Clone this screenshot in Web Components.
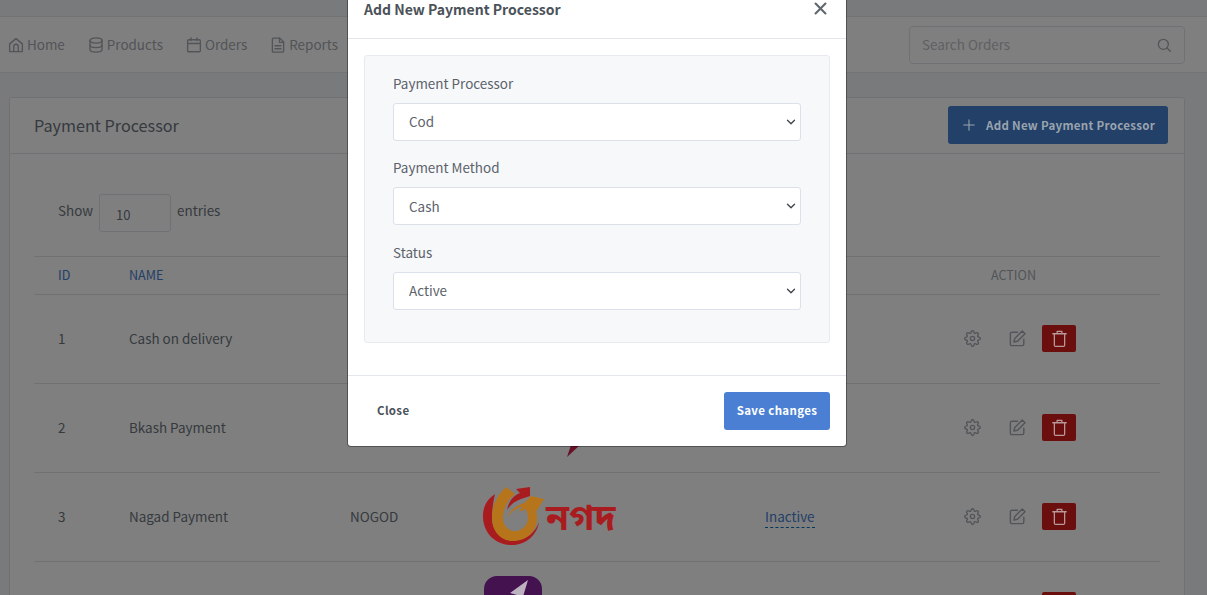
<!doctype html>
<html lang="en"><head><meta charset="utf-8"><title>Payment Processor</title>
<style>
html,body{margin:0;height:100%;overflow:hidden;background:#f2f5f8}
body{font:13.44px/20px "Noto Sans CJK SC","Liberation Sans",sans-serif;color:#6c757d}
</style></head><body>
<pp-app></pp-app>
<script>
const ICONS={
 home:'<path d="M3.500 10.500 12 3.500l8.500 7V20a.8.8 0 0 1-.8.8H4.300a.8.8 0 0 1-.8-.8z"/><path d="M9 20.800V14a3 3 0 0 1 6 0v6.800"/>',
 data:'<ellipse cx="12" cy="6" rx="8" ry="3.500"/><path d="M4 6v12c0 1.900 3.600 3.500 8 3.500s8-1.600 8-3.500V6"/><path d="M4 12c0 1.900 3.600 3.500 8 3.500s8-1.600 8-3.500"/>',
 cal:'<rect x="3.500" y="5" width="17" height="16" rx="1.500"/><path d="M3.500 10h17M8 2.500V6M16 2.500V6"/>',
 file:'<path d="M6 2.800h8.500L19.500 8v12a1.500 1.500 0 0 1-1.500 1.500H6A1.500 1.500 0 0 1 4.500 20V4.300A1.500 1.500 0 0 1 6 2.800z"/><path d="M14 3v5.500h5.500M8 13h8M8 17h8"/>',
 search:'<circle cx="11" cy="11" r="7.500"/><path d="m16.500 16.500 5 5"/>',
 gear:'<circle cx="12" cy="12" r="3"/><path d="M19.400 15a1.650 1.650 0 0 0 .33 1.820l.06.06a2 2 0 0 1 0 2.830 2 2 0 0 1-2.830 0l-.06-.06a1.650 1.650 0 0 0-1.820-.33 1.650 1.650 0 0 0-1 1.510V21a2 2 0 0 1-2 2 2 2 0 0 1-2-2v-.09A1.650 1.650 0 0 0 9 19.400a1.650 1.650 0 0 0-1.820.33l-.06.06a2 2 0 0 1-2.830 0 2 2 0 0 1 0-2.830l.06-.06a1.650 1.650 0 0 0 .33-1.820 1.650 1.650 0 0 0-1.510-1H3a2 2 0 0 1-2-2 2 2 0 0 1 2-2h.09A1.650 1.650 0 0 0 4.600 9a1.650 1.650 0 0 0-.33-1.820l-.06-.06a2 2 0 0 1 0-2.830 2 2 0 0 1 2.830 0l.06.06a1.650 1.650 0 0 0 1.820.33H9a1.650 1.650 0 0 0 1-1.510V3a2 2 0 0 1 2-2 2 2 0 0 1 2 2v.09a1.650 1.650 0 0 0 1 1.510 1.650 1.650 0 0 0 1.820-.33l.06-.06a2 2 0 0 1 2.830 0 2 2 0 0 1 0 2.830l-.06.06a1.650 1.650 0 0 0-.33 1.820V9a1.650 1.650 0 0 0 1.510 1H21a2 2 0 0 1 2 2 2 2 0 0 1-2 2h-.09a1.650 1.650 0 0 0-1.510 1z"/>',
 edit:'<path d="M20 13v6a2 2 0 0 1-2 2H5a2 2 0 0 1-2-2V6a2 2 0 0 1 2-2h7"/><path d="M18 2.500 21.500 6 12 15.500l-4.500 1 1-4.500z"/>',
 trash:'<path d="M3.500 6h17M9 6V3h6v3"/><path d="M5.500 6v14.500a1.500 1.500 0 0 0 1.500 1.500h10a1.500 1.500 0 0 0 1.500-1.500V6"/>',
 plus:'<path d="M12 3v18M3 12h18"/>',
 x:'<path d="M5 5l14 14M19 5 5 19"/>',
 chev:'<path d="m6 9 6 6 6-6"/>'
};
class PIcon extends HTMLElement{connectedCallback(){
 const s=this.getAttribute('size')||16,w=this.getAttribute('weight')||1.8;
 this.attachShadow({mode:'open'}).innerHTML=`<style>:host{display:inline-flex;flex:none}svg{display:block}</style><svg width="${s}" height="${s}" viewBox="0 0 24 24" fill="none" stroke="currentColor" stroke-width="${w}" stroke-linecap="round" stroke-linejoin="round" aria-hidden="true">${ICONS[this.getAttribute('name')]}</svg>`;
}}
customElements.define('p-icon',PIcon);

class NavLink extends HTMLElement{connectedCallback(){
 this.attachShadow({mode:'open'}).innerHTML=`<style>:host{display:flex;align-items:center;gap:2px;color:#a3a9b1}span{padding-bottom:2px}</style><p-icon name="${this.getAttribute('icon')}" size="18" weight="1.800"></p-icon><span><slot></slot></span>`;
}}
customElements.define('nav-link',NavLink);

class TopNav extends HTMLElement{connectedCallback(){
 this.attachShadow({mode:'open'}).innerHTML=`<style>
 :host{display:flex;align-items:center;justify-content:space-between;height:57px;box-sizing:border-box;margin-top:16px;border-top:1px solid #e2e6ea;border-bottom:1px solid #e2e6ea;background:#fff;padding:0 22px 0 7px}
 .links{display:flex;gap:22px}
 .search{width:276px;height:38px;box-sizing:border-box;border:1px solid #dfe3e8;border-radius:4px;display:flex;align-items:center;justify-content:space-between;padding:0 12px 0 12px;color:#bcc1c7}
 .search span{padding-bottom:2px}
 p-icon{color:#a3a9b1}
 </style><div class="links"><nav-link icon="home">Home</nav-link><nav-link icon="data">Products</nav-link><nav-link icon="cal">Orders</nav-link><nav-link icon="file">Reports</nav-link></div>
 <div class="search"><span>Search Orders</span><p-icon name="search" size="16" weight="2"></p-icon></div>`;
}}
customElements.define('top-nav',TopNav);

class ActionIcons extends HTMLElement{connectedCallback(){
 this.attachShadow({mode:'open'}).innerHTML=`<style>
 :host{display:flex;align-items:center;padding-left:24px;color:#a3a9b1}
 .e{margin-left:27px}.d{margin-left:15px;width:34px;height:27px;border-radius:2px;background:#d61c1c;display:flex;align-items:center;justify-content:center}
 .t{color:#b89a9a;position:relative;z-index:15}
 </style><p-icon name="gear" size="17" weight="1.900"></p-icon><p-icon class="e" name="edit" size="19" weight="1.800"></p-icon><span class="d"><p-icon class="t" name="trash" size="19" weight="1.600"></p-icon></span>`;
}}
customElements.define('action-icons',ActionIcons);

class TableRow extends HTMLElement{connectedCallback(){
 this.attachShadow({mode:'open'}).innerHTML=`<style>
 :host{display:grid;grid-template-columns:71px 221px 134px 281px 199px 221px;height:89px;box-sizing:border-box;border-bottom:1px solid #dee2e6;padding-bottom:2px;align-items:center;color:#6c757d;flex:none}
 ::slotted(*){padding-left:24px}
 </style><slot></slot>`;
}}
customElements.define('table-row',TableRow);

class TableHead extends HTMLElement{connectedCallback(){
 this.attachShadow({mode:'open'}).innerHTML=`<style>
 :host{display:grid;grid-template-columns:71px 221px 134px 281px 199px 221px;height:39px;box-sizing:border-box;border-top:1px solid #dee2e6;border-bottom:1px solid #dee2e6;padding-bottom:2px;align-items:center;font-size:12.6px;color:#4680d0;flex:none}
 .id,.n{padding-left:24px}.a{grid-column:6;color:#a3a9b1;padding-left:51px}
 </style><span class="id">ID</span><span class="n">NAME</span><span class="a">ACTION</span>`;
}}
customElements.define('table-head',TableHead);

class NagadLogo extends HTMLElement{connectedCallback(){
 this.attachShadow({mode:'open'}).innerHTML=`<style>:host{display:flex;align-items:center;position:relative;z-index:15;margin-left:-6px;height:70px;color:#a81c20;font:700 37px/40px "Noto Sans Bengali","Noto Sans CJK SC",sans-serif}svg{display:block;flex:none}span{margin:10px 0 0 -2px;white-space:nowrap}</style>
 <svg width="70" height="70" viewBox="0 0 70 70" aria-hidden="true">
  <path d="M17 13C8 19 4.500 27 5 37c1 16 13 27 29 27 14 0 25-10 27-23-4 11-13 18-25 18-13 0-22-9-22-22 0-8 1-16 3-24z" fill="#a81c20"/>
  <path d="M28 6 37 13C29 19 25 28 25 37c0 7 5 13 12 13s13-6 13-13c0-3-1-6-2-9l-7 3c3-5 6-11 12-16l13 3-8 13c1 2 1 4 1 6 0 13-10 23-24 23-13 0-21-10-21-23 0-11 3-20 14-31z" fill="#b7751b"/>
  <path d="M38 8 52 6v9l-9 3c-6 2-11 6-14 11 2-9 6-14 13-17z" fill="#a81c20"/>
  <path d="M29 37c2-7 9-13 18-15l2 2c-9 2-16 6-20 13z" fill="#b7751b"/>
 </svg><span>নগদ</span>`;
}}
customElements.define('nagad-logo',NagadLogo);

class StatusLink extends HTMLElement{connectedCallback(){
 this.attachShadow({mode:'open'}).innerHTML=`<style>:host{display:block;color:#4680d0}span{border-bottom:1px dashed #0a6ebd;padding-bottom:1px}</style><span><slot></slot></span>`;
}}
customElements.define('status-link',StatusLink);

class ProcessorCard extends HTMLElement{connectedCallback(){
 this.attachShadow({mode:'open'}).innerHTML=`<style>
 :host{display:block;margin:24px 22px 0 9px;background:#fff;border:1px solid #dfe3e8;border-radius:3px}
 .h{height:56px;box-sizing:border-box;border-bottom:1px solid #dfe3e8;padding-bottom:2px;display:flex;align-items:center;justify-content:space-between;padding-left:24px;padding-right:16px;font-size:16.2px;color:#6c757d}
 .b{height:38px;width:220px;box-sizing:border-box;background:#4680d0;border-radius:3px;display:flex;align-items:center;gap:10px;padding:0 14px;white-space:nowrap}
 .lbl,.pl{color:#9aa4af;position:relative;z-index:15}
 .lbl{font-size:11.5px;font-weight:700;letter-spacing:.3px}
 .body{padding:40px 24px 0}
 .show{display:flex;align-items:center;height:38px;gap:6px;margin-bottom:24px}
 .t{padding-bottom:6px}
 .sel{width:72px;height:38px;box-sizing:border-box;border:1px solid #dfe3e8;border-radius:3px;padding:3px 16px 0;display:flex;align-items:center;font-size:13px}
 </style>
 <div class="h"><span>Payment Processor</span><div class="b"><p-icon class="pl" name="plus" size="14" weight="1.800"></p-icon><span class="lbl">Add New Payment Processor</span></div></div>
 <div class="body"><div class="show"><span class="t" style="margin-left:24px">Show</span><span class="sel">10</span><span class="t">entries</span></div><slot></slot></div>`;
}}
customElements.define('processor-card',ProcessorCard);

class FormField extends HTMLElement{connectedCallback(){
 const v=this.getAttribute('value'),pb=this.getAttribute('text-pad')||2;
 this.attachShadow({mode:'open'}).innerHTML=`<style>
 :host{display:block;color:#5b626a}
 label{display:block;line-height:20px;margin:-1px 0 10px}
 .w{position:relative}
 select{appearance:none;-webkit-appearance:none;width:100%;height:38px;box-sizing:border-box;background:#fff;border:1px solid #dbe0ea;border-radius:3px;padding:0 15px ${pb}px;font:13.44px/20px "Noto Sans CJK SC","Liberation Sans",sans-serif;color:#5b626a;display:block}
 p-icon{position:absolute;right:3px;top:12px;color:#40464d;pointer-events:none}
 </style><label>${this.getAttribute('label')}</label><div class="w"><select aria-label="${this.getAttribute('label')}"><option>${v}</option></select><p-icon name="chev" size="14" weight="2.300"></p-icon></div>`;
}}
customElements.define('form-field',FormField);

class ProcessorModal extends HTMLElement{connectedCallback(){
 this.attachShadow({mode:'open'}).innerHTML=`<style>
 :host{position:absolute;z-index:20;left:348px;top:-16px;width:498px;background:#fff;border-radius:0 0 3px 3px;box-shadow:0 0 0 1px rgba(0,0,0,.35);color:#4b5259;display:block}
 .head{height:55px;box-sizing:border-box;border-bottom:1px solid #e3e7ed;display:flex;justify-content:space-between;align-items:flex-start;padding:16px 17px 0 16px;font-size:14px;line-height:18px;font-weight:600}
 .x{color:#62686f}
 .body{padding:16px 16px 32px}
 .panel{background:#f7f8fa;border:1px solid #e7ebf0;border-radius:3px;height:288px;box-sizing:border-box;padding:18px 28px 0;display:flex;flex-direction:column;gap:17px}
 .third{margin-top:1px}
 .foot{border-top:1px solid #e3e7ed;height:71px;box-sizing:border-box;display:flex;justify-content:space-between;align-items:center;padding:0 16px 0 29px;font-size:11.5px;font-weight:700;letter-spacing:.35px}
 .close{padding-bottom:2px}
 .save{width:106px;height:38px;box-sizing:border-box;padding-bottom:2px;background:#4a7fd3;color:#fff;border-radius:3px;display:flex;align-items:center;justify-content:center}
 </style>
 <div class="head"><span>Add New Payment Processor</span><p-icon class="x" name="x" size="17" weight="3"></p-icon></div>
 <div class="body"><div class="panel"><form-field label="Payment Processor" value="Cod"></form-field><form-field label="Payment Method" value="Cash" text-pad="0"></form-field><form-field class="third" label="Status" value="Active"></form-field></div></div>
 <div class="foot"><span class="close">Close</span><span class="save">Save changes</span></div>`;
}}
customElements.define('processor-modal',ProcessorModal);

class PPApp extends HTMLElement{connectedCallback(){
 this.attachShadow({mode:'open'}).innerHTML=`<style>
 :host{display:block;height:595px;overflow:hidden;position:relative}
 .bd{position:absolute;inset:0;background:rgba(0,0,0,.5);z-index:10}
 .rows{display:flex;flex-direction:column}
 .bk{display:block}
 .pay{width:58px;height:58px;border-radius:13px;background:#86249e}
 .pay svg{display:block;position:relative;z-index:15}
 </style>
 <top-nav></top-nav>
 <processor-card>
  <div class="rows">
  <table-head></table-head>
  <table-row><span>1</span><span>Cash on delivery</span><span></span><span></span><span></span><action-icons></action-icons></table-row>
  <table-row><span>2</span><span>Bkash Payment</span><span></span><span><svg class="bk" width="100" height="60" viewBox="0 0 100 60" aria-hidden="true"><path d="M96 48 83 60 87 48z" fill="#d1204f"/></svg></span><span></span><action-icons></action-icons></table-row>
  <table-row><span>3</span><span>Nagad Payment</span><span>NOGOD</span><span><nagad-logo></nagad-logo></span><span><status-link>Inactive</status-link></span><action-icons></action-icons></table-row>
  <table-row><span></span><span></span><span></span><span><div class="pay"><svg width="58" height="58" viewBox="0 0 58 58" aria-hidden="true"><path d="M44 4 26 17l7 2 1 11 4-6z" fill="#bcb2c0"/></svg></div></span><span></span><action-icons></action-icons></table-row>
  </div>
 </processor-card>
 <div class="bd"></div>
 <processor-modal></processor-modal>`;
}}
customElements.define('pp-app',PPApp);
</script></body></html>
